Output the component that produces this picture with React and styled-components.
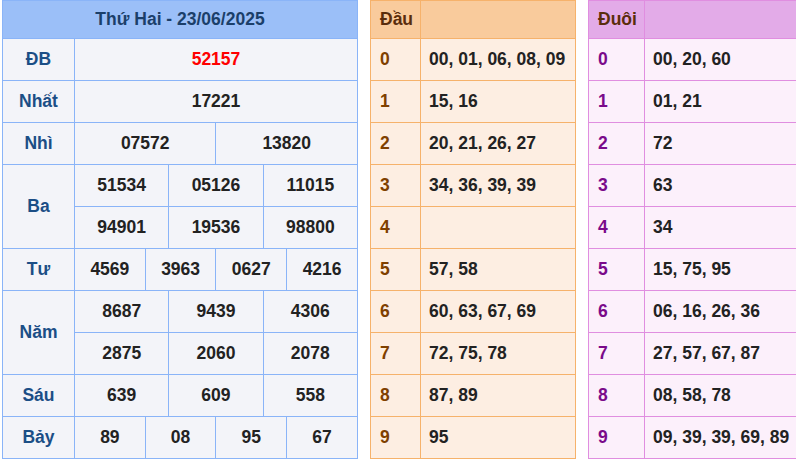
import React from "react";
import styled, { createGlobalStyle } from "styled-components";

const Global = createGlobalStyle`
  body { margin: 0; font-family: "Liberation Sans", Arial, sans-serif; background: #fff; }
`;

const Page = styled.div`
  display: flex;
  gap: 12px;
  padding: 0 0 0 2px;
  align-items: flex-start;
`;

const Table = styled.table`
  border-collapse: collapse;
  table-layout: fixed;
  width: ${(p) => p.w}px;
  flex: none;
  font-weight: bold;
  font-size: 17.5px;
  color: #222;
  td, th {
    border: 1px solid ${(p) => p.line};
    height: 41px;
    padding: 0;
  }
  th { height: 37px; }
`;

const Head = styled.th`
  background: ${(p) => p.bg};
  color: ${(p) => p.fg};
  font-weight: bold;
  text-align: ${(p) => p.align || "center"};
  padding: ${(p) => p.pad || "0"} !important;
`;

const Label = styled.td`
  background: #f3f4f9;
  color: #1b4e86;
  text-align: center;
`;

const Num = styled.td`
  background: #f3f4f9;
  text-align: center;
  color: ${(p) => (p.red ? "#ff0000" : "#222")};
`;

const Key = styled.td`
  background: ${(p) => p.bg};
  color: ${(p) => p.fg};
  padding-left: 9px !important;
`;

const Val = styled.td`
  background: ${(p) => p.bg};
  padding-left: 8px !important;
  white-space: nowrap;
`;

const prizes = [
  ["ĐB", [["52157"]], true],
  ["Nhất", [["17221"]]],
  ["Nhì", [["07572", "13820"]]],
  ["Ba", [["51534", "05126", "11015"], ["94901", "19536", "98800"]]],
  ["Tư", [["4569", "3963", "0627", "4216"]]],
  ["Năm", [["8687", "9439", "4306"], ["2875", "2060", "2078"]]],
  ["Sáu", [["639", "609", "558"]]],
  ["Bảy", [["89", "08", "95", "67"]]],
];

const dau = ["00, 01, 06, 08, 09", "15, 16", "20, 21, 26, 27", "34, 36, 39, 39", "", "57, 58", "60, 63, 67, 69", "72, 75, 78", "87, 89", "95"];
const duoi = ["00, 20, 60", "01, 21", "72", "63", "34", "15, 75, 95", "06, 16, 26, 36", "27, 57, 67, 87", "08, 58, 78", "09, 39, 39, 69, 89"];

const Results = () => (
  <Table w={356} line="#8ab4f8">
    <colgroup>
      <col style={{ width: 72 }} />
      {Array.from({ length: 12 }).map((_, i) => <col key={i} />)}
    </colgroup>
    <thead>
      <tr>
        <Head colSpan={13} bg="#9bbff8" fg="#1b3f6a">Thứ Hai - 23/06/2025</Head>
      </tr>
    </thead>
    <tbody>
      {prizes.flatMap(([name, rows, red]) =>
        rows.map((nums, ri) => (
          <tr key={name + ri}>
            {ri === 0 && <Label rowSpan={rows.length}>{name}</Label>}
            {nums.map((n) => (
              <Num key={n} colSpan={12 / nums.length} red={red}>{n}</Num>
            ))}
          </tr>
        ))
      )}
    </tbody>
  </Table>
);

const Side = ({ title, data, w, keyW, line, headBg, bodyBg, keyFg }) => (
  <Table w={w} line={line}>
    <colgroup>
      <col style={{ width: keyW }} />
      <col />
    </colgroup>
    <thead>
      <tr>
        <Head bg={headBg} fg="#5a2d0c" align="left" pad="0 0 0 9px">{title}</Head>
        <Head bg={headBg} />
      </tr>
    </thead>
    <tbody>
      {data.map((v, i) => (
        <tr key={i}>
          <Key bg={bodyBg} fg={keyFg}>{i}</Key>
          <Val bg={bodyBg}>{v}</Val>
        </tr>
      ))}
    </tbody>
  </Table>
);

export default function App() {
  return (
    <Page>
      <Global />
      <Results />
      <Side title="Đầu" data={dau} w={206} keyW={50} line="#f6b26b" headBg="#f9cb9c" bodyBg="#fdeee2" keyFg="#7f4000" />
      <Side title="Đuôi" data={duoi} w={212} keyW={56} line="#e08ee0" headBg="#e3abe8" bodyBg="#fcf0fb" keyFg="#7a0a8a" />
    </Page>
  );
}
